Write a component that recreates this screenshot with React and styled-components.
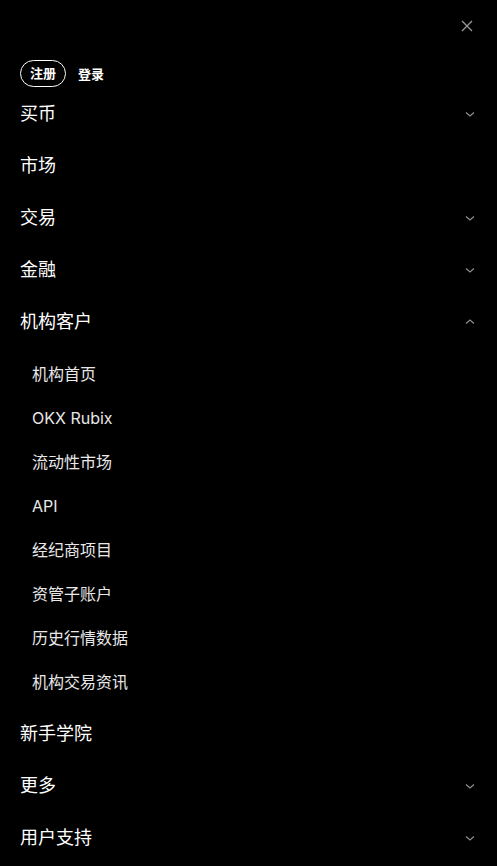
import React from "react";
import styled, { createGlobalStyle } from "styled-components";

const Global = createGlobalStyle`
  html, body {
    margin: 0;
    padding: 0;
    background: #000;
  }
  body {
    font-family: Inter, "Noto Sans CJK SC", sans-serif;
    color: #fff;
  }
`;

const Drawer = styled.div`
  width: 497px;
  min-height: 866px;
  background: #000;
  box-sizing: border-box;
  overflow: hidden;
`;

const TopBar = styled.div`
  display: flex;
  justify-content: flex-end;
  align-items: center;
  height: 52px;
  padding: 0 22px 0 0;
  box-sizing: border-box;
`;

const CloseButton = styled.button`
  display: flex;
  align-items: center;
  justify-content: center;
  width: 16px;
  height: 16px;
  padding: 0;
  border: 0;
  background: none;
  color: #9a9a9a;
  cursor: pointer;
`;

const AuthRow = styled.div`
  display: flex;
  align-items: center;
  gap: 12px;
  padding: 8px 20px 0;
  height: 27px;
`;

const Pill = styled.button`
  height: 27px;
  padding: 0 9px;
  border: 1px solid #fff;
  border-radius: 14px;
  background: none;
  color: #fff;
  font-family: inherit;
  font-size: 13px;
  font-weight: 600;
  line-height: 1;
  box-sizing: border-box;
`;

const TextLink = styled.a`
  color: #fff;
  font-size: 13px;
  font-weight: 600;
  text-decoration: none;
`;

const Menu = styled.ul`
  list-style: none;
  margin: 0;
  padding: 0;
`;

const Row = styled.li`
  display: flex;
  align-items: center;
  justify-content: space-between;
  height: 52px;
  padding: 2px 22px 0 20px;
  box-sizing: border-box;
  font-size: 18px;
  font-weight: 400;
  line-height: 1;
  color: #fff;
`;

const Chevron = styled.svg`
  width: 10px;
  height: 10px;
  color: #8f8f8f;
  transform: ${(p) => (p.$open ? "rotate(180deg)" : "none")};
`;

const SubList = styled.ul`
  list-style: none;
  margin: 0;
  padding: 4px 0;
`;

const SubItem = styled.li`
  display: flex;
  align-items: center;
  height: 44px;
  padding: 1px 0 0 32px;
  box-sizing: border-box;
  font-size: 16px;
  font-weight: 400;
  line-height: 1;
  color: #e8e8e8;
`;

const ArrowIcon = ({ open }) => (
  <Chevron $open={open} viewBox="0 0 10 10" fill="none">
    <path d="M1 3.5L5 7L9 3.5" stroke="currentColor" strokeWidth="1.2" />
  </Chevron>
);

const items = [
  { label: "买币", arrow: true },
  { label: "市场" },
  { label: "交易", arrow: true },
  { label: "金融", arrow: true },
  {
    label: "机构客户",
    arrow: true,
    open: true,
    children: [
      "机构首页",
      "OKX Rubix",
      "流动性市场",
      "API",
      "经纪商项目",
      "资管子账户",
      "历史行情数据",
      "机构交易资讯",
    ],
  },
  { label: "新手学院" },
  { label: "更多", arrow: true },
  { label: "用户支持", arrow: true },
];

export default function App() {
  return (
    <>
      <Global />
      <Drawer>
        <TopBar>
          <CloseButton aria-label="close">
            <svg width="12" height="12" viewBox="0 0 12 12" fill="none">
              <path d="M1 1L11 11M11 1L1 11" stroke="currentColor" strokeWidth="1.3" />
            </svg>
          </CloseButton>
        </TopBar>
        <AuthRow>
          <Pill>注册</Pill>
          <TextLink href="#">登录</TextLink>
        </AuthRow>
        <Menu>
          {items.map((item) => (
            <React.Fragment key={item.label}>
              <Row>
                <span>{item.label}</span>
                {item.arrow && <ArrowIcon open={item.open} />}
              </Row>
              {item.children && (
                <SubList>
                  {item.children.map((c) => (
                    <SubItem key={c}>{c}</SubItem>
                  ))}
                </SubList>
              )}
            </React.Fragment>
          ))}
        </Menu>
      </Drawer>
    </>
  );
}
